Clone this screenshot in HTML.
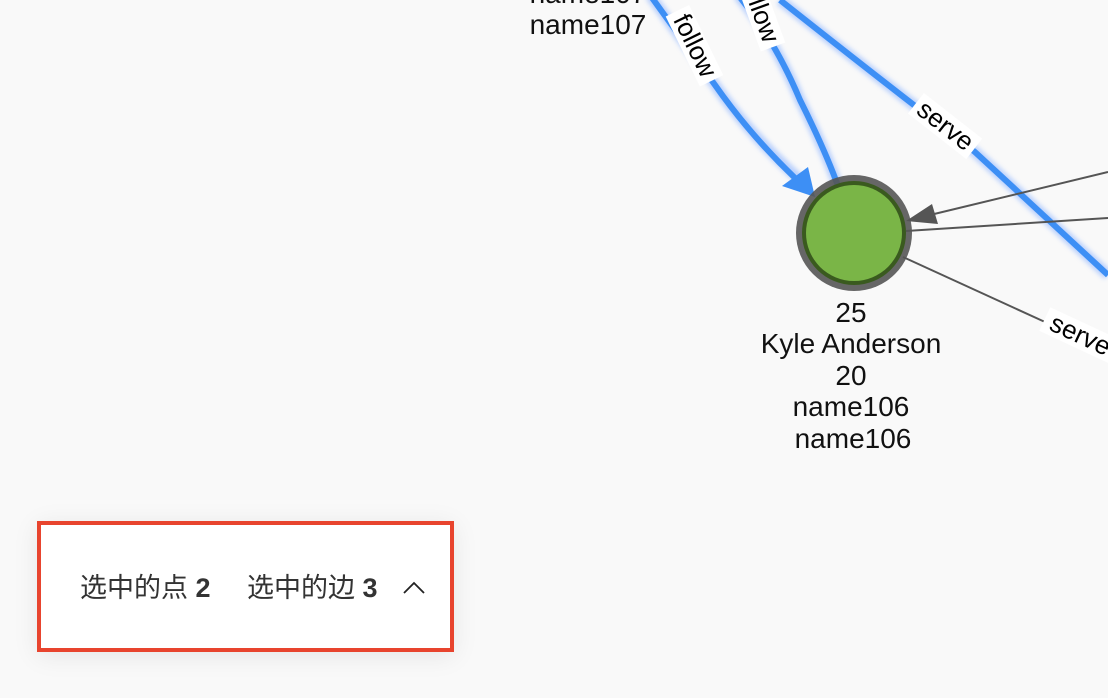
<!DOCTYPE html>
<html><head><meta charset="utf-8"><style>
html,body{margin:0;padding:0;width:1108px;height:698px;overflow:hidden;background:#f9f9f9;font-family:"Liberation Sans","Noto Sans CJK SC",sans-serif;}
svg{position:absolute;left:0;top:0}
.box{position:absolute;left:37px;top:521px;width:409px;height:123px;border:4px solid #e8442e;background:#fff;box-shadow:0 4px 24px rgba(0,0,0,0.08);}
.txt{position:absolute;top:48px;font-size:27px;color:#333;white-space:nowrap;line-height:30px}
.txt b{font-weight:bold}
</style></head><body>
<svg width="1108" height="698" viewBox="0 0 1108 698">
<defs><filter id="gl" x="-20%" y="-20%" width="140%" height="140%"><feGaussianBlur stdDeviation="2.5"/></filter></defs>
<g stroke="#8fb5ff" stroke-width="11" fill="none" opacity="0.6" filter="url(#gl)">
<path d="M650 -5 L715 85 Q750 135 800 180"/>
<path d="M738 -5 Q775 40 800 100 Q825 150 838 186"/>
<path d="M780 0 Q900 95 975 152 L1108 275"/>
</g>
<g stroke="#3d8ff5" stroke-width="6" fill="none">
<path d="M650 -5 L715 85 Q750 135 795 178"/>
<path d="M738 -5 Q775 40 800 100 Q825 150 838 186"/>
<path d="M780 0 Q900 95 975 152 L1108 275"/>
</g>
<polygon points="782,186 808,167 815,197" fill="#3d8ff5"/>
<g stroke="#555" stroke-width="2" fill="none">
<line x1="1108" y1="172" x2="930" y2="215"/>
<line x1="1108" y1="218" x2="906" y2="231"/>
<line x1="903" y1="257" x2="1045" y2="322"/>
</g>
<polygon points="906,221 932,204 938,224" fill="#555"/>
<circle cx="854" cy="233" r="58" fill="#555" opacity="0.9"/>
<circle cx="854" cy="233" r="52" fill="#3a5a1f"/>
<circle cx="854" cy="233" r="48" fill="#7ab547"/>
<g font-family="Liberation Sans, sans-serif" font-size="26" fill="#000">
<g transform="translate(690,48) rotate(64)"><rect x="-39" y="-18" width="78" height="26" fill="#fff"/><text x="0" y="3" text-anchor="middle">follow</text></g>
<g transform="translate(755,12) rotate(70)"><rect x="-39" y="-18" width="78" height="26" fill="#fff"/><text x="0" y="3" text-anchor="middle">follow</text></g>
<g transform="translate(942,130) rotate(38)"><rect x="-37" y="-18" width="74" height="26" fill="#fff"/><text x="0" y="3" text-anchor="middle">serve</text></g>
<g transform="translate(1078,340) rotate(25)"><rect x="-39" y="-18" width="78" height="26" fill="#fff"/><text x="0" y="3" text-anchor="middle">serve</text></g>
</g>
<g font-family="Liberation Sans, sans-serif" font-size="28" fill="#111" text-anchor="middle">
<text x="588" y="3">name107</text>
<text x="588" y="34">name107</text>
<text x="851" y="322">25</text>
<text x="851" y="353">Kyle Anderson</text>
<text x="851" y="385">20</text>
<text x="851" y="416">name106</text>
<text x="853" y="448">name106</text>
</g>
</svg>
<div class="box"><div class="txt" style="left:39px">选中的点 <b>2</b></div><div class="txt" style="left:206px">选中的边 <b>3</b></div>
<svg style="left:361px;top:56px" width="24" height="14" viewBox="0 0 24 14"><path d="M2 12 L12 2 L22 12" stroke="#222" stroke-width="1.8" fill="none"/></svg></div>
</body></html>
